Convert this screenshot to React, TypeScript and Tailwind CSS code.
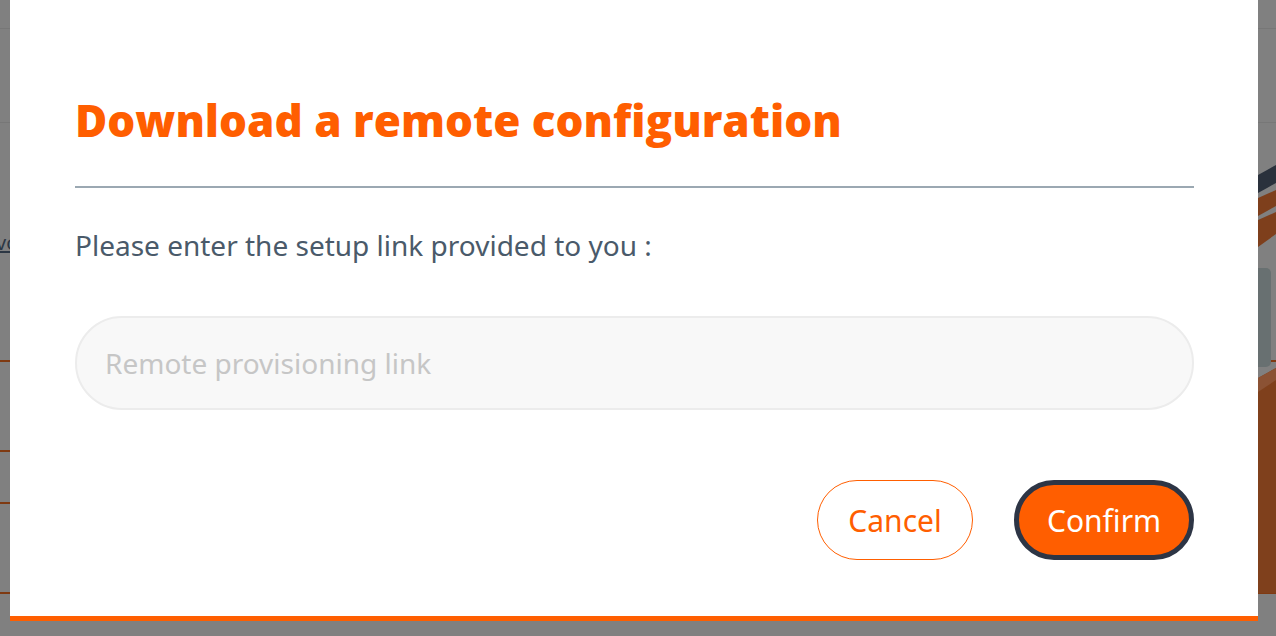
import { useState } from 'react'

function SideArt() {
  // right edge of the page behind the dialog, mostly hidden
  return (
    <svg className="absolute right-0 top-[140px]" width="18" height="470" viewBox="0 0 18 470">
      <polygon points="0,35 18,25 18,43 0,53" fill="#2a313c" />
      <polygon points="0,58 18,50 18,66 0,76" fill="#7e3f1c" />
      <polygon points="0,80 18,72 18,94 0,107" fill="#7e3f1c" />
      <rect x="-6" y="128" width="19" height="99" rx="5" fill="#687071" />
      <polygon points="0,238 18,228 18,453 0,453" fill="#7f401c" />
      <polygon points="0,238 18,228 18,240 0,252" fill="#8b5234" />
    </svg>
  )
}

export default function App() {
  const [link, setLink] = useState('')

  return (
    <div className="relative h-[636px] w-[1276px] overflow-hidden bg-[#808080] font-['Noto_Sans',sans-serif]">
      {/* dimmed page behind the dialog */}
      <div className="flex flex-col">
        <div className="h-[29px] border-b border-[#777777]" />
        <div className="h-[94px] border-b border-[#777777]" />
        <div className="mt-[106px] h-[28px] pl-0 text-[20px] leading-[28px] text-[#2c3744]">
          <span className="-ml-[4px] underline">vo</span>
        </div>
        <div className="mt-[103px] h-[2px] bg-[#7f3a12]" />
        <div className="mt-[88px] h-[2px] bg-[#7f3a12]" />
        <div className="mt-[50px] h-[2px] bg-[#7f3a12]" />
        <div className="mt-[88px] h-[2px] bg-[#7f3a12]" />
      </div>
      <SideArt />

      {/* dialog */}
      <div className="absolute left-[10px] top-0 flex h-[621px] w-[1248px] flex-col border-b-[5px] border-[#ff5e00] bg-white pl-[65px] pr-[64px] pt-[92px]">
        <h2 className="font-['Open_Sans',sans-serif] text-[44px] font-extrabold leading-[56px] text-[#ff5e00]">Download a remote configuration</h2>
        <div className="mt-[38px] h-[2px] bg-[#9ba8b2]" />
        <p className="mt-[39px] text-[28px] leading-[36px] text-[#4a5a6a]">Please enter the setup link provided to you :</p>
        <input
          value={link}
          onChange={(e) => setLink(e.target.value)}
          placeholder="Remote provisioning link"
          className="mt-[53px] h-[94px] rounded-full border-2 border-[#ececec] bg-[#f8f8f8] px-[28px] text-[28px] text-[#4a5a6a] outline-none placeholder:text-[#c6c6c6]"
        />
        <div className="mt-[70px] flex justify-end gap-[41px]">
          <button className="h-[80px] w-[156px] rounded-full border-[1.5px] border-[#ff5e00] bg-white text-[30px] text-[#ff5e00]">
            Cancel
          </button>
          <button className="h-[80px] w-[180px] rounded-full border-[5px] border-[#2d3545] bg-[#ff5e00] text-[30px] text-white">
            Confirm
          </button>
        </div>
      </div>
    </div>
  )
}
